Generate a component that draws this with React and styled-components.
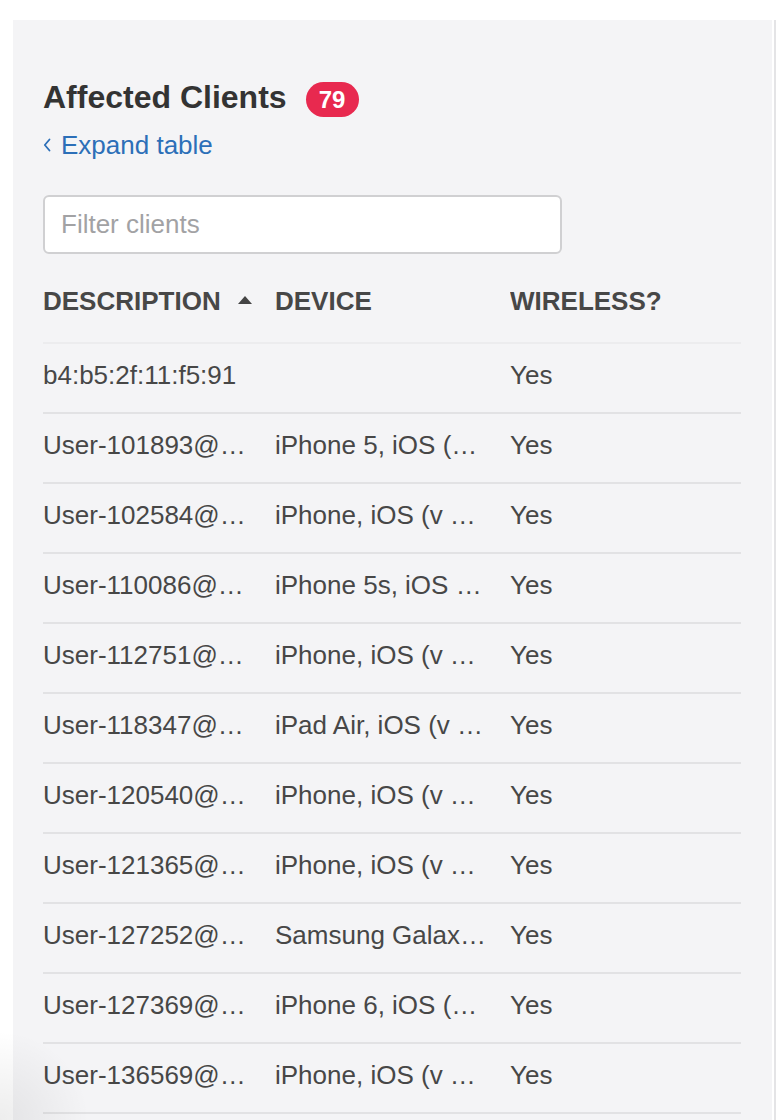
import React from "react";
import styled, { createGlobalStyle } from "styled-components";

const GlobalStyle = createGlobalStyle`
  html, body {
    margin: 0;
    padding: 0;
    background: #ffffff;
  }
  body {
    font-family: "Liberation Sans", Arial, Helvetica, sans-serif;
    -webkit-font-smoothing: antialiased;
  }
`;

const Page = styled.div`
  width: 776px;
  height: 1120px;
  box-sizing: border-box;
  padding: 20px 0 0 13px;
  display: flex;
  overflow: hidden;
  position: relative;
`;

const Panel = styled.section`
  width: 759px;
  background: #f4f4f6;
  box-sizing: border-box;
  padding: 59px 31px 0 30px;
`;

const Edge = styled.div`
  width: 2px;
  margin-left: 2px;
  background: #e4e4e6;
`;

const TitleRow = styled.div`
  display: flex;
  align-items: flex-start;
  gap: 19px;
`;

const Title = styled.h2`
  margin: 0;
  font-size: 32px;
  line-height: 36px;
  font-weight: 700;
  color: #333333;
`;

const Badge = styled.span`
  margin-top: 3px;
  height: 35px;
  min-width: 53px;
  box-sizing: border-box;
  padding: 0 12px;
  border-radius: 18px;
  background: #e8294f;
  color: #ffffff;
  font-size: 24px;
  font-weight: 700;
  line-height: 35px;
  text-align: center;
`;

const ExpandLink = styled.a`
  margin-top: 13px;
  display: flex;
  align-items: center;
  gap: 10px;
  font-size: 26px;
  line-height: 30px;
  color: #2c6fb8;
  text-decoration: none;
  cursor: pointer;
`;

const FilterInput = styled.input`
  display: block;
  margin-top: 35px;
  width: 519px;
  height: 59px;
  box-sizing: border-box;
  border: 2px solid #d0d0d2;
  border-radius: 6px;
  background: #ffffff;
  padding: 0 16px;
  font-family: inherit;
  font-size: 26px;
  color: #444444;
  outline: none;

  &::placeholder {
    color: #a2a2a4;
  }
`;

const Table = styled.div`
  margin-top: 32px;
  width: 698px;
`;

const Row = styled.div`
  display: grid;
  grid-template-columns: 232px 235px 1fr;
  padding: ${(p) => (p.$head ? "0 0 26px" : "16px 0 22px")};
  border-bottom: 2px solid ${(p) => (p.$head ? "#ececee" : "#e2e2e4")};
`;

const Cell = styled.div`
  font-size: 26px;
  line-height: 30px;
  color: #474747;
  font-weight: ${(p) => (p.$head ? 700 : 400)};
  white-space: nowrap;
  overflow: hidden;
  display: flex;
  align-items: center;
  gap: 17px;
`;

const SortArrow = styled.span`
  width: 0;
  height: 0;
  border-left: 7.5px solid transparent;
  border-right: 7.5px solid transparent;
  border-bottom: 8px solid #444444;
  margin-top: -3px;
`;

const CornerShade = styled.div`
  position: absolute;
  left: 0;
  bottom: 0;
  width: 90px;
  height: 90px;
  pointer-events: none;
  background: radial-gradient(
    circle at 0 100%,
    rgba(0, 0, 0, 0.07),
    rgba(0, 0, 0, 0) 70%
  );
`;

const clients = [
  ["b4:b5:2f:11:f5:91", "", "Yes"],
  ["User-101893@…", "iPhone 5, iOS (…", "Yes"],
  ["User-102584@…", "iPhone, iOS (v …", "Yes"],
  ["User-110086@…", "iPhone 5s, iOS …", "Yes"],
  ["User-112751@…", "iPhone, iOS (v …", "Yes"],
  ["User-118347@…", "iPad Air, iOS (v …", "Yes"],
  ["User-120540@…", "iPhone, iOS (v …", "Yes"],
  ["User-121365@…", "iPhone, iOS (v …", "Yes"],
  ["User-127252@…", "Samsung Galax…", "Yes"],
  ["User-127369@…", "iPhone 6, iOS (…", "Yes"],
  ["User-136569@…", "iPhone, iOS (v …", "Yes"],
];

function Chevron() {
  return (
    <svg width="8" height="14" viewBox="0 0 8 14" fill="none">
      <path
        d="M6.5 1.5 L1.8 7 L6.5 12.5"
        stroke="#2c6fb8"
        strokeWidth="1.8"
        strokeLinecap="round"
        strokeLinejoin="round"
      />
    </svg>
  );
}

export default function App() {
  return (
    <>
      <GlobalStyle />
      <Page>
        <Panel>
          <TitleRow>
            <Title>Affected Clients</Title>
            <Badge>79</Badge>
          </TitleRow>
          <ExpandLink>
            <Chevron />
            Expand table
          </ExpandLink>
          <FilterInput placeholder="Filter clients" />
          <Table>
            <Row $head>
              <Cell $head>
                DESCRIPTION <SortArrow />
              </Cell>
              <Cell $head>DEVICE</Cell>
              <Cell $head>WIRELESS?</Cell>
            </Row>
            {clients.map(([desc, device, wireless]) => (
              <Row key={desc}>
                <Cell>{desc}</Cell>
                <Cell>{device}</Cell>
                <Cell>{wireless}</Cell>
              </Row>
            ))}
          </Table>
        </Panel>
        <Edge />
        <CornerShade />
      </Page>
    </>
  );
}
